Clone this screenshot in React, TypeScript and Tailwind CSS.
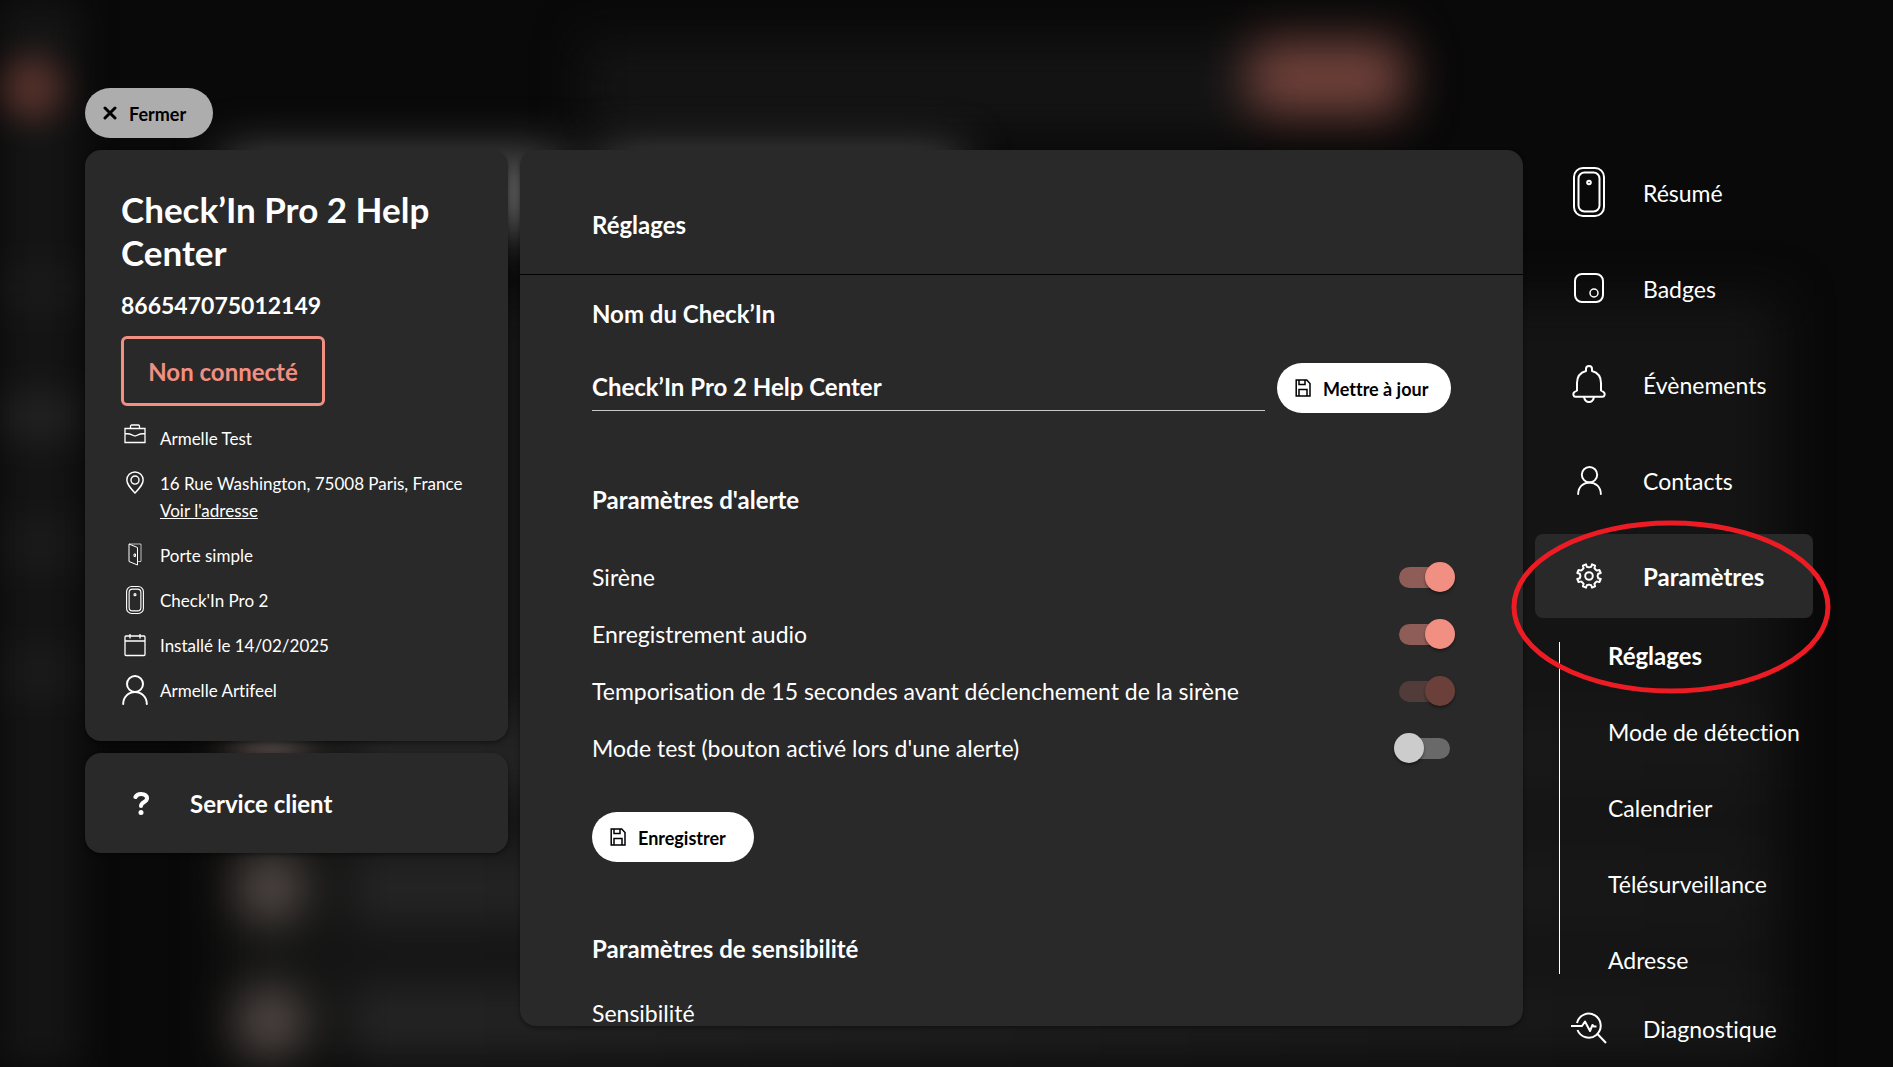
import React from "react";

type IconProps = { className?: string };

function DeviceIcon({ className }: IconProps) {
  return (
    <svg className={className} viewBox="0 0 32 50" fill="none" stroke="currentColor" strokeWidth="2" aria-hidden="true">
      <rect x="1" y="1" width="30" height="48" rx="9" />
      <rect x="5.500" y="5.500" width="21" height="39" rx="6" />
      <circle cx="16" cy="15.500" r="1.800" />
    </svg>
  );
}

function BadgeIcon({ className }: IconProps) {
  return (
    <svg className={className} viewBox="0 0 32 32" fill="none" stroke="currentColor" strokeWidth="2" aria-hidden="true">
      <rect x="2" y="2" width="28" height="28" rx="7" />
      <circle cx="21" cy="21" r="4" strokeWidth="1.500" />
    </svg>
  );
}

function BellIcon({ className }: IconProps) {
  return (
    <svg className={className} viewBox="0 0 34 38" fill="none" stroke="currentColor" strokeWidth="2" strokeLinejoin="round" aria-hidden="true">
      <path d="M14 6V4a3 3 0 0 1 6 0v2c5.500 1.500 9 6 9 12v7.500l2.500 1.500c2 1.500 1.200 4.700-1 4.700h-27c-2.200 0-3-3.200-1-4.700L5 25.500V18C5 12 8.500 7.500 14 6z" />
      <path d="M12 32c0.600 3 2.500 5 5 5s4.400-2 5-5" />
    </svg>
  );
}

function PersonIcon({ className }: IconProps) {
  return (
    <svg className={className} viewBox="0 0 26 30" fill="none" stroke="currentColor" strokeWidth="2" strokeLinecap="round" aria-hidden="true">
      <circle cx="13" cy="9" r="8" />
      <path d="M1.200 29C1.200 22 6.500 17 13 17s11.800 5 11.800 12" />
    </svg>
  );
}

function GearIcon({ className }: IconProps) {
  return (
    <svg className={className} viewBox="0 0 26 26" fill="none" stroke="currentColor" strokeWidth="2" strokeLinejoin="round" aria-hidden="true">
      <path d="M10 1.300 10.800 3.800 13 4.400 15.200 3.800 16 1.300 19.100 2.600 18.400 5.200 19.500 6.500 20.800 7.600 23.400 6.900 24.700 10 22.200 10.800 21.600 13 22.200 15.200 24.700 16 23.400 19.100 20.800 18.400 19.500 19.500 18.400 20.800 19.100 23.400 16 24.700 15.200 22.200 13 21.600 10.800 22.200 10 24.700 6.900 23.400 7.600 20.800 6.500 19.500 5.200 18.400 2.600 19.100 1.300 16 3.800 15.200 4.400 13 3.800 10.800 1.300 10 2.600 6.900 5.200 7.600 6.500 6.500 7.600 5.200 6.900 2.600z" />
      <circle cx="13" cy="13" r="3.800" />
    </svg>
  );
}

function DiagnosticIcon({ className }: IconProps) {
  return (
    <svg className={className} viewBox="0 0 36 32" fill="none" stroke="currentColor" strokeWidth="2" strokeLinejoin="round" aria-hidden="true">
      <path d="M6 11A12 12 0 1 1 6.500 18" />
      <path d="M0 14h11l3-4.500 5 9.500 2.500-6 1.500 1.500h2.500" />
      <path d="M26.500 22 35 31" />
    </svg>
  );
}

function BriefcaseIcon({ className }: IconProps) {
  return (
    <svg className={className} viewBox="0 0 22 20" fill="none" stroke="currentColor" strokeWidth="1.300" aria-hidden="true">
      <path d="M1 4.500h20v14H1zM6.500 4.500V2.200C6.500 1.500 7 1 7.700 1h6.600c.7 0 1.200.5 1.200 1.200v2.300M1 9.500c3 0 6 0.500 8.500 2 1 .6 2 .6 3 0 2.500-1.500 5.500-2 8.500-2" />
    </svg>
  );
}

function PinIcon({ className }: IconProps) {
  return (
    <svg className={className} viewBox="0 0 20 24" fill="none" stroke="currentColor" strokeWidth="1.500" aria-hidden="true">
      <path d="M10 23C5 17.500 1.500 14 1.500 9.500a8.500 8.500 0 0 1 17 0C18.500 14 15 17.500 10 23z" />
      <circle cx="10" cy="9.500" r="4.200" />
    </svg>
  );
}

function DoorIcon({ className }: IconProps) {
  return (
    <svg className={className} viewBox="0 0 14 23" fill="none" stroke="currentColor" strokeWidth="1" aria-hidden="true">
      <path d="M1 1v17.500l8.500 3.500V4.500z" />
      <path d="M1 1h12v17.500h-3.500" opacity=".7" />
      <path d="M6 11h1.500v2.500H6z" />
    </svg>
  );
}

function CalendarIcon({ className }: IconProps) {
  return (
    <svg className={className} viewBox="0 0 22 24" fill="none" stroke="currentColor" strokeWidth="1.300" aria-hidden="true">
      <rect x="1" y="3" width="20" height="19.500" rx="1" />
      <path d="M1 8h20M6 1v4.500M16 1v4.500" />
    </svg>
  );
}

function SaveIcon({ className }: IconProps) {
  return (
    <svg className={className} viewBox="0 0 16 18" fill="none" stroke="currentColor" strokeWidth="1.500" aria-hidden="true">
      <path d="M1.200 1h10.500l3.300 3.500v12.500H1.200z" />
      <path d="M4 1v4.500h6V1M4 17v-6.500h8V17" />
    </svg>
  );
}

function CrossIcon({ className }: IconProps) {
  return (
    <svg className={className} viewBox="0 0 14 14" fill="none" stroke="currentColor" strokeWidth="3" strokeLinecap="round" aria-hidden="true">
      <path d="M2 2l10 10M12 2 2 12" />
    </svg>
  );
}

function QuestionIcon({ className }: IconProps) {
  return (
    <svg className={className} viewBox="0 0 16 23" fill="none" stroke="currentColor" strokeWidth="4" strokeLinecap="round" aria-hidden="true">
      <path d="M2.500 5C3.500 3 5 2 8 2c3.500 0 6 1.500 6 4.500 0 3.500-6 3.500-6 7.500" />
      <circle cx="8" cy="20.500" r="2.500" fill="currentColor" stroke="none" />
    </svg>
  );
}

const details = [
  { icon: <BriefcaseIcon className="mb-2 h-5 w-[22px]" />, text: "Armelle Test" },
  { icon: <PinIcon className="h-[23px] w-5" />, text: "16 Rue Washington, 75008 Paris, France", link: "Voir l'adresse" },
  { icon: <DoorIcon className="h-[23px] w-[14px]" />, text: "Porte simple" },
  { icon: <DeviceIcon className="h-7 w-[18px]" />, text: "Check'In Pro 2" },
  { icon: <CalendarIcon className="h-6 w-[22px]" />, text: "Installé le 14/02/2025" },
  { icon: <PersonIcon className="h-[30px] w-[26px]" />, text: "Armelle Artifeel" },
];

const menu = [
  { label: "Résumé", icon: <DeviceIcon className="h-[50px] w-8" /> },
  { label: "Badges", icon: <BadgeIcon className="size-8" /> },
  { label: "Évènements", icon: <BellIcon className="h-[38px] w-[34px]" /> },
  { label: "Contacts", icon: <PersonIcon className="h-[29px] w-[25px]" /> },
];

const subMenu = ["Réglages", "Mode de détection", "Calendrier", "Télésurveillance", "Adresse"];

const alertSettings = [
  { id: "sirene", label: "Sirène", on: true },
  { id: "audio", label: "Enregistrement audio", on: true },
  { id: "tempo", label: "Temporisation de 15 secondes avant déclenchement de la sirène", on: true, disabled: true },
  { id: "test", label: "Mode test (bouton activé lors d'une alerte)", on: false },
];

function Switch({ id, on, disabled }: { id: string; on: boolean; disabled?: boolean }) {
  return (
    <span className="relative flex h-[30px] w-[61px] items-center px-[5px]">
      <input
        id={id}
        type="checkbox"
        role="switch"
        defaultChecked={on}
        disabled={disabled}
        className="peer h-[21px] w-full cursor-pointer appearance-none rounded-full bg-[#696969] checked:bg-[#8f5d57] disabled:bg-[#513c39]"
      />
      <span className="pointer-events-none absolute left-0 size-[30px] rounded-full bg-[#cccccc] shadow-[0_2px_3px_rgba(0,0,0,0.4)] peer-checked:right-0 peer-checked:left-auto peer-checked:bg-[#f28f83] peer-disabled:bg-[#6b403a]" />
    </span>
  );
}

function MenuItem({ label, icon, active }: { label: string; icon: React.ReactNode; active?: boolean }) {
  return (
    <a
      href="#"
      aria-current={active ? "page" : undefined}
      className={
        active
          ? "flex h-[84px] shrink-0 items-center gap-9 rounded-lg bg-[#292929] pl-9 text-2xl leading-7 font-bold"
          : "flex h-[84px] shrink-0 items-center gap-9 rounded-lg pl-9"
      }
    >
      <span className="flex w-9 justify-center">{icon}</span>
      <span className="pt-0.5">{label}</span>
    </a>
  );
}

function Backdrop() {
  return (
    <div aria-hidden="true" className="pointer-events-none absolute inset-0 flex overflow-hidden bg-[#090909]">
      <div className="flex w-20 flex-col gap-20 bg-[#141414] pt-14 blur-lg">
        <div className="h-16 w-16 rounded-full bg-[#54302a]" />
        <div className="mt-16 h-12 bg-[#191919]" />
        <div className="h-12 bg-[#202020]" />
        <div className="h-12 bg-[#1a1a1a]" />
        <div className="h-12 bg-[#1a1a1a]" />
      </div>
      <div className="flex flex-1 flex-col pl-36">
        <div className="flex h-[152px] items-start pt-10 pl-[360px] blur-xl">
          <div className="h-24 w-[664px] bg-[#141414]" />
          <div className="h-[76px] w-[158px] rounded-2xl bg-[#71423b]" />
        </div>
        <div className="flex h-20 gap-9 blur-xl">
          <div className="w-[340px] bg-[#545454]" />
          <div className="w-[360px] bg-[#545454]" />
        </div>
        <div className="mt-16 mr-28 flex flex-1 flex-col gap-[66px] bg-[#131413] pt-[424px] pl-3 blur-xl">
          {[0, 1, 2].map((row) => (
            <div key={row} className="flex shrink-0 gap-12">
              <div className="h-[68px] w-[68px] rounded-full bg-[#5c504d]" />
              <div className="h-[68px] flex-1 bg-linear-to-r from-[#262626] to-[#151615]" />
            </div>
          ))}
        </div>
      </div>
    </div>
  );
}

export default function App() {
  return (
    <div className="relative h-screen overflow-hidden bg-[#090909] font-['Lato',sans-serif] text-[23px] leading-7 text-white [font-variant-ligatures:none]">
      <Backdrop />
      <div className="relative flex h-full flex-col gap-3 pt-[88px] pr-20 pl-[85px]">
        <button className="flex h-[50px] w-32 shrink-0 items-center gap-3 rounded-full bg-[#adadad] pl-[18px] text-lg font-bold text-black">
          <CrossIcon className="size-[14px]" />
          <span className="pt-0.5">Fermer</span>
        </button>
        <div className="flex min-h-0 flex-1 gap-3">
          <aside className="flex w-[423px] shrink-0 flex-col gap-3">
            <section className="rounded-2xl bg-[#292929] px-9 pt-[38px] pb-[37px] shadow-[0_2px_4px_rgba(0,0,0,0.4)]">
              <h1 className="text-[35px] leading-[43px] font-bold">Check’In Pro 2 Help Center</h1>
              <p className="mt-[17px] font-bold">866547075012149</p>
              <p className="mt-[17px] flex h-[70px] w-[204px] items-center justify-center rounded-md border-3 border-[#f28f83] pt-0.5 text-2xl leading-7 font-bold text-[#f28f83]">
                Non connecté
              </p>
              <ul className="mt-[19px] flex flex-col gap-[18px] text-[17px] leading-[27px]">
                {details.map((detail) => (
                  <li key={detail.text} className="flex gap-3">
                    <span className="flex h-[25px] w-[27px] shrink-0 items-center justify-center">{detail.icon}</span>
                    <span>
                      {detail.text}
                      {detail.link && (
                        <a href="#" className="block underline">
                          {detail.link}
                        </a>
                      )}
                    </span>
                  </li>
                ))}
              </ul>
            </section>
            <a
              href="#"
              className="flex h-[100px] items-center gap-[41px] rounded-2xl bg-[#292929] pl-12 text-2xl leading-7 font-bold shadow-[0_2px_4px_rgba(0,0,0,0.4)]"
            >
              <QuestionIcon className="h-[23px] w-4" />
              <span className="pt-0.5">Service client</span>
            </a>
          </aside>

          <main className="mb-[41px] flex min-w-0 flex-1 flex-col overflow-hidden rounded-2xl bg-[#292929] shadow-[0_2px_4px_rgba(0,0,0,0.4)]">
            <header className="shrink-0 border-b border-black px-[72px] pt-[61px] pb-[35px]">
              <h2 className="text-2xl leading-7 font-bold">Réglages</h2>
            </header>
            <div className="min-h-0 flex-1 overflow-hidden px-[72px] pt-[25px]">
              <form className="flex flex-col gap-[35px]">
                <label htmlFor="device-name" className="text-2xl leading-7 font-bold">
                  Nom du Check’In
                </label>
                <div className="flex gap-3">
                  <input
                    id="device-name"
                    defaultValue="Check’In Pro 2 Help Center"
                    className="h-12 min-w-0 flex-1 border-b border-[#c8c8c8] bg-transparent text-2xl font-bold outline-none"
                  />
                  <button type="button" className="flex h-[50px] w-[174px] items-center gap-3 rounded-full bg-white pl-[18px] text-lg font-bold text-black">
                    <SaveIcon className="h-[18px] w-4" />
                    <span className="pt-0.5">Mettre à jour</span>
                  </button>
                </div>
              </form>

              <form className="mt-[73px]">
                <h3 className="text-2xl leading-7 font-bold">Paramètres d'alerte</h3>
                <div className="mt-12 flex flex-col gap-[27px]">
                  {alertSettings.map((setting) => (
                    <div key={setting.id} className="-mr-1 flex h-[30px] items-center justify-between">
                      <label htmlFor={setting.id}>{setting.label}</label>
                      <Switch id={setting.id} on={setting.on} disabled={setting.disabled} />
                    </div>
                  ))}
                </div>
                <button type="button" className="mt-[49px] flex h-[50px] w-[162px] items-center gap-3 rounded-full bg-white pl-[18px] text-lg font-bold text-black">
                  <SaveIcon className="h-[18px] w-4" />
                  <span className="pt-0.5">Enregistrer</span>
                </button>
              </form>

              <section className="mt-[73px]">
                <h3 className="text-2xl leading-7 font-bold">Paramètres de sensibilité</h3>
                <p className="mt-9">Sensibilité</p>
              </section>
            </div>
          </main>

          <nav className="relative flex w-[278px] shrink-0 flex-col gap-3">
            {menu.map((item) => (
              <MenuItem key={item.label} {...item} />
            ))}
            <MenuItem label="Paramètres" icon={<GearIcon className="size-[26px]" />} active />
            <ul className="mt-3 ml-6 flex shrink-0 flex-col gap-12 border-l border-white pl-12">
              {subMenu.map((label, index) => (
                <li key={label}>
                  <a href="#" className={index === 0 ? "text-2xl leading-7 font-bold" : ""}>
                    {label}
                  </a>
                </li>
              ))}
            </ul>
            <MenuItem label="Diagnostique" icon={<DiagnosticIcon className="h-8 w-9" />} />
            <svg
              aria-hidden="true"
              className="pointer-events-none absolute top-[370px] -left-6 h-[174px] w-80"
              viewBox="0 0 320 174"
              fill="none"
            >
              <ellipse cx="160" cy="87" rx="157" ry="84" stroke="#ed1c24" strokeWidth="5" />
            </svg>
          </nav>
        </div>
      </div>
    </div>
  );
}
